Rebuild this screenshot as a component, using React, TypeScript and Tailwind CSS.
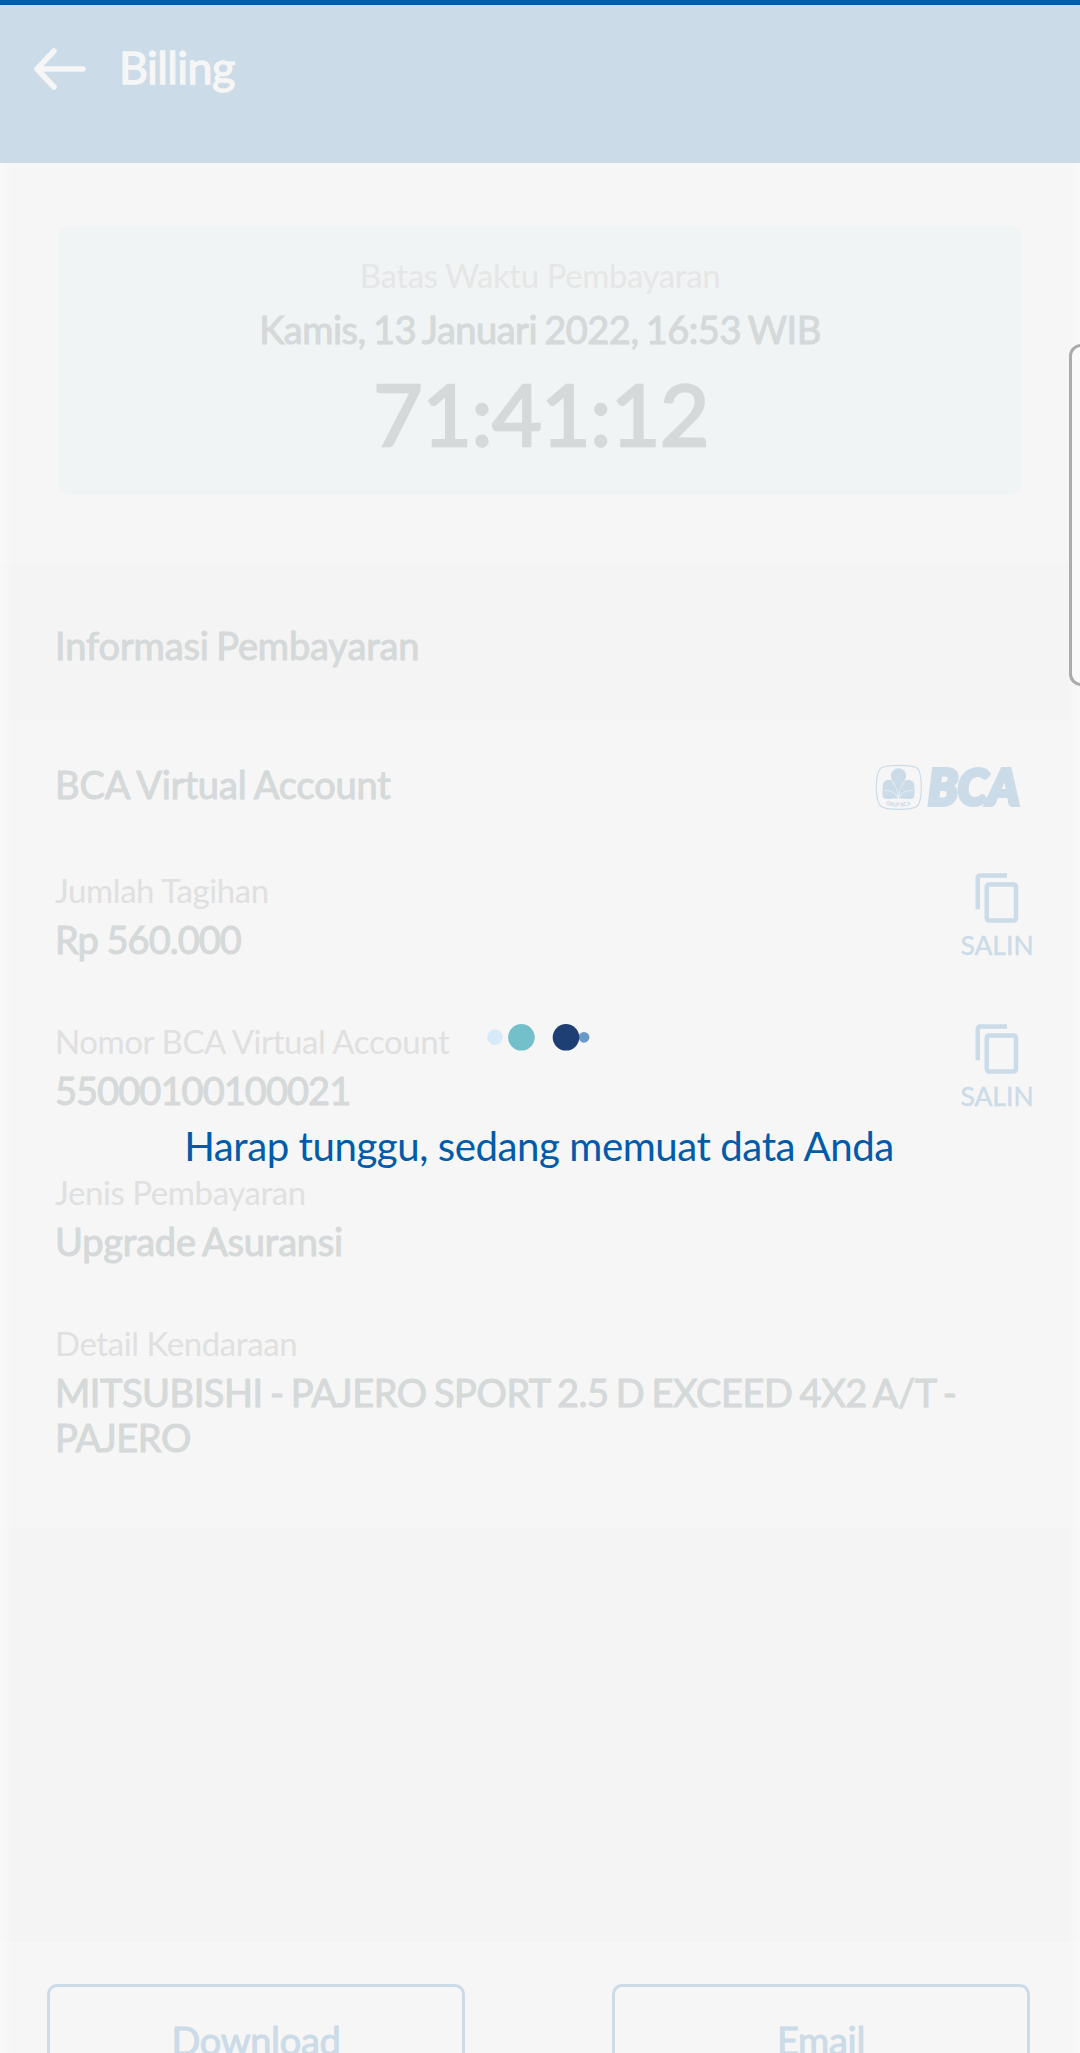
import React from "react";

function Field({ label, children }: { label: string; children: React.ReactNode }) {
  return (
    <div>
      <p className="text-[33px] leading-[40px] tracking-[-0.42px] text-[#e0e0e0]">{label}</p>
      <div className="mt-[7px] text-[38px] leading-[45px] text-[#d5d9d9] [-webkit-text-stroke:1px_#d5d9d9]">{children}</div>
    </div>
  );
}

function CopyButton() {
  return (
    <button className="mr-[3px] flex w-[80px] flex-col items-center pt-px text-[#cbdbe7]">
      <svg viewBox="0 0 24 24" className="ml-px size-[54px] fill-current">
        <path d="M16 1H4c-1.1 0-2 .9-2 2v14h2V3h12V1zm3 4H8c-1.1 0-2 .9-2 2v14c0 1.1.9 2 2 2h11c1.1 0 2-.9 2-2V7c0-1.1-.9-2-2-2zm0 16H8V7h11v14z" />
      </svg>
      <span className="mt-[4px] text-[26.5px] leading-[32px] [-webkit-text-stroke:0.4px_#cbdbe7]">SALIN</span>
    </button>
  );
}

function BankLogo() {
  return (
    <svg viewBox="48 72 435 141" className="h-[47px] w-[145px] overflow-visible" fill="#cbdbe7">
      <path
        d="M117 76C150 76 167 79 173 86C181 96 184 118 184 142C184 168 180 188 173 197C166 206 148 208 117 208C86 208 68 206 61 197C53 188 49 168 49 142C49 118 53 96 61 86C68 79 84 76 117 76Z"
        fill="none"
        stroke="#cbdbe7"
        strokeWidth="3.500"
      />
      <circle cx="115.500" cy="108" r="23" />
      <circle cx="86" cy="137" r="18" />
      <circle cx="145" cy="137" r="18" />
      <path d="M97 116C104 128 112 142 115 176C118 142 126 128 134 116Z" />
      <path d="M90 120L112 176L115 140Z" />
      <path d="M141 120L119 176L115 140Z" />
      <path d="M68 142C84 142 102 147 108 157C112 163 113 169 113 177C102 173 84 181 70 174Q66 164 68 142Z" />
      <path d="M163 142C147 142 129 147 123 157C119 163 118 169 118 177C129 173 147 181 161 174Q165 164 163 142Z" />
      <path
        d="M72 152C92 150 109 157 113 178M159 152C139 150 122 157 118 178M97 128C108 138 112 148 114 168M134 128C123 138 119 148 117 168"
        fill="none"
        stroke="#f6f6f6"
        strokeWidth="1.800"
      />
      <path id="arc" d="M77 194Q116 206 155 194" fill="none" />
      <text fontFamily="Lato" fontWeight="900" fontSize="17">
        <textPath href="#arc" textLength="76" lengthAdjust="spacingAndGlyphs">
          GRUP BCA
        </textPath>
      </text>
      <text
        x="204"
        y="194"
        fontFamily="Lato"
        fontWeight="900"
        fontStyle="italic"
        fontSize="146"
        textLength="274"
        lengthAdjust="spacingAndGlyphs"
        stroke="#cbdbe7"
        strokeWidth="12"
      >
        BCA
      </text>
    </svg>
  );
}

function Loader() {
  return (
    <div className="absolute inset-x-0 top-[1020px] flex flex-col items-center">
      <svg viewBox="485 1020 110 35" className="h-[35px] w-[110px]">
        <circle cx="495" cy="1037.300" r="7.800" fill="#d6eaf8" />
        <circle cx="521.400" cy="1037.300" r="13.300" fill="#73c0cb" />
        <circle cx="584" cy="1037.300" r="5.400" fill="#6a99c8" />
        <circle cx="566" cy="1037.300" r="13.300" fill="#1e3f73" />
      </svg>
      <p className="mt-[66px] mr-[2px] text-[40.2px] leading-[50px] tracking-[-0.45px] text-[#005bab]">
        Harap tunggu, sedang memuat data Anda
      </p>
    </div>
  );
}

export default function App() {
  return (
    <div className="relative flex h-[2053px] w-[1080px] flex-col overflow-hidden bg-[#f6f6f6] font-[Lato,sans-serif]">
      <div className="h-[5px] shrink-0 bg-[#005bab]" />
      <header className="flex h-[158px] shrink-0 items-start bg-[#cbdbe7] pt-[35px] pl-[34px] text-[#f6f6f6]">
        <svg
          viewBox="0 0 52 42"
          className="mt-[8px] h-[42px] w-[52px]"
          fill="none"
          stroke="currentColor"
          strokeWidth="5.500"
          strokeLinecap="round"
          strokeLinejoin="round"
        >
          <path d="M49 21H3M20 3L3 21L20 39" />
        </svg>
        <h1 className="ml-[33px] text-[45px] leading-[54px] tracking-[-0.6px] [-webkit-text-stroke:1.3px_#f6f6f6]">Billing</h1>
      </header>

      <section className="h-[400px] shrink-0 px-[58px] pt-[63px]">
        <div className="flex h-[269px] flex-col items-center rounded-[12px] bg-[#f0f4f5] pt-[29px]">
          <p className="text-[33px] leading-[40px] tracking-[-0.42px] text-[#e6e6e6]">Batas Waktu Pembayaran</p>
          <p className="mt-[12px] text-[38px] leading-[45px] tracking-[-0.5px] text-[#d5d9d9] [word-spacing:-2px] [-webkit-text-stroke:1px_#d5d9d9]">
            Kamis, 13 Januari 2022, 16:53 WIB
          </p>
          <p className="mt-[8px] ml-[2px] text-[86px] leading-[106px] tracking-[-0.8px] text-[#d5d9d9] [-webkit-text-stroke:2.4px_#d5d9d9]">
            71:41:12
          </p>
        </div>
      </section>

      <div className="flex h-[157px] shrink-0 items-start bg-[#f4f4f4] pt-[60px] pl-[55px]">
        <h2 className="text-[38px] leading-[45px] tracking-[-0.15px] text-[#d5d9d9] [word-spacing:-2px] [-webkit-text-stroke:1px_#d5d9d9]">
          Informasi Pembayaran
        </h2>
      </div>

      <section className="flex h-[807px] shrink-0 flex-col pr-[40px] pl-[55px]">
        <div className="flex items-start justify-between pt-[42px]">
          <h2 className="text-[38px] leading-[45px] tracking-[-0.15px] text-[#d5d9d9] [word-spacing:-1px] [-webkit-text-stroke:1px_#d5d9d9]">
            BCA Virtual Account
          </h2>
          <div className="mt-[2px] mr-[19px]">
            <BankLogo />
          </div>
        </div>
        <div className="mt-[59px] flex h-[151px] items-start justify-between">
          <Field label="Jumlah Tagihan">
            <p className="tracking-[-1px]">Rp 560.000</p>
          </Field>
          <CopyButton />
        </div>
        <div className="flex h-[151px] items-start justify-between">
          <Field label="Nomor BCA Virtual Account">
            <p className="tracking-[-0.95px]">55000100100021</p>
          </Field>
          <CopyButton />
        </div>
        <div className="h-[151px]">
          <Field label="Jenis Pembayaran">
            <p className="tracking-[-0.2px] [word-spacing:-2px]">Upgrade Asuransi</p>
          </Field>
        </div>
        <Field label="Detail Kendaraan">
          <p className="w-[950px] tracking-[-0.45px] [word-spacing:-2.1px]">MITSUBISHI - PAJERO SPORT 2.5 D EXCEED 4X2 A/T - PAJERO</p>
        </Field>
      </section>

      <div className="h-[415px] shrink-0 bg-[#f4f4f4]" />

      <footer className="flex h-[111px] shrink-0 justify-between overflow-hidden pt-[42px] pr-[50px] pl-[47px]">
        {["Download", "Email"].map((name) => (
          <button
            key={name}
            className="flex h-[113px] w-[418px] items-start justify-center rounded-[10px] border-[3px] border-[#cbdbe7] pt-[31px] text-[38px] leading-[45px] tracking-[-0.3px] text-[#cbdbe7] [-webkit-text-stroke:1px_#cbdbe7]"
          >
            {name}
          </button>
        ))}
      </footer>

      <div className="absolute top-[163px] bottom-0 left-0 w-[12px] bg-linear-to-r from-white/40 to-transparent" />
      <div className="absolute top-[163px] right-0 bottom-0 w-[12px] bg-linear-to-l from-white/40 to-transparent" />
      <div className="absolute top-[344px] -right-[20px] h-[342px] w-[31px] rounded-[12px] border-[3px] border-[#ababab] bg-[#fafafa]" />
      <Loader />
    </div>
  );
}
